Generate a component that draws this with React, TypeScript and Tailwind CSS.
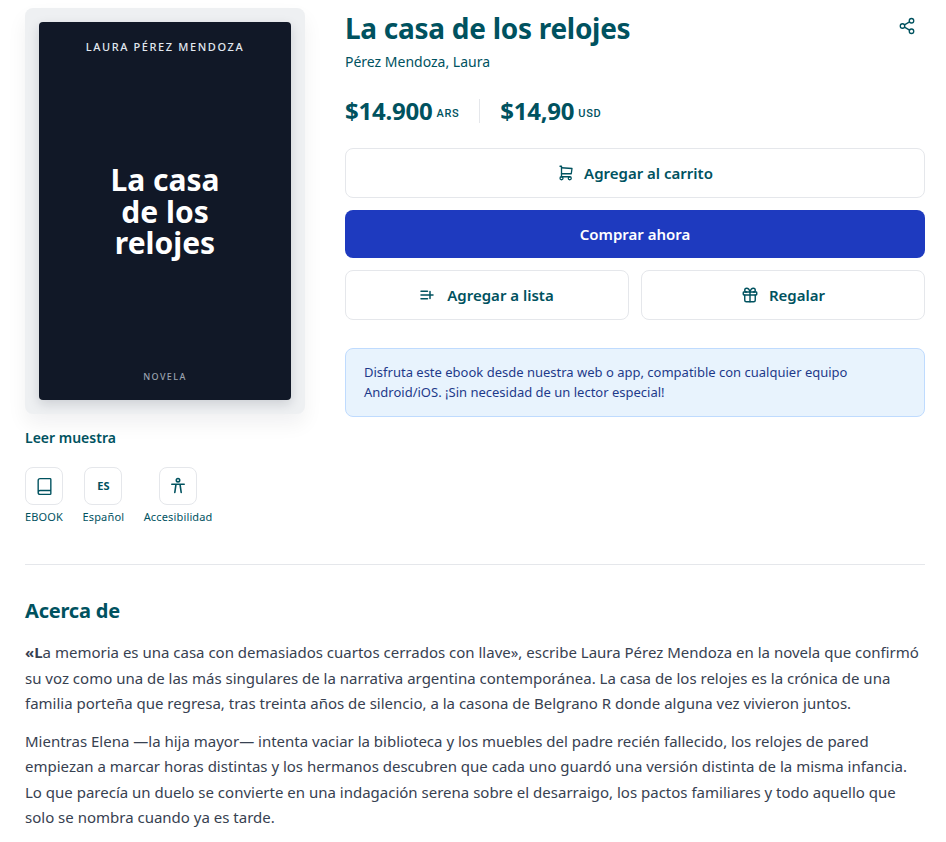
import { Book, Share2 } from "lucide-react";
import { TbGift, TbShoppingCart } from "react-icons/tb";

const noto = "font-['Noto_Sans',sans-serif]";

function ListAdd() {
  return (
    <svg width="14" height="14" viewBox="0 0 14 14" fill="none" stroke="currentColor" strokeWidth="1.5" strokeLinecap="round">
      <path d="M1 3.2h6.5M1 7h12M1 10.8h6.5M10 3.5v7" />
    </svg>
  );
}

function Person() {
  return (
    <svg width="18" height="18" viewBox="0 0 18 18" fill="none" stroke="currentColor" strokeWidth="1.6" strokeLinecap="round">
      <circle cx="9" cy="3.2" r="1.7" />
      <path d="M2.8 7.2h12.4M7 7.2 5.8 15.5M11 7.2l1.2 8.3" />
    </svg>
  );
}

function Feature({ icon, label }: { icon: React.ReactNode; label: string }) {
  return (
    <div className="flex flex-col items-center gap-[4px]">
      <div className="flex h-[38px] w-[38px] items-center justify-center rounded-lg border border-[#e5e7eb] bg-white text-[#00525f]">
        {icon}
      </div>
      <span className="text-[11px] leading-[16px] tracking-[0.15px] text-[#00525f]">{label}</span>
    </div>
  );
}

export default function App() {
  return (
    <div className={`${noto} min-h-[842px] w-[900px] ml-[25px] bg-white pt-2 text-[#00525f]`}>
      <div className="flex gap-10">
        <div className="w-[280px] shrink-0">
          <div className="rounded-lg bg-[#eef0f2] p-[14px] shadow-[0_10px_20px_rgba(15,23,42,0.06)]">
            <div className="flex h-[378px] flex-col items-center rounded bg-[#111827] pt-[17px] pb-[16px] shadow-[0_4px_12px_rgba(15,23,42,0.15)]">
              <div className="text-[11px] leading-[16px] font-medium tracking-[1.6px] text-[#e2e8f0]">LAURA PÉREZ MENDOZA</div>
              <div className="flex flex-1 items-center text-center text-[30px] leading-[31.5px] font-bold text-white">
                <span className="w-[130px] -translate-y-[1px]">La casa de los relojes</span>
              </div>
              <div className="text-[9px] leading-[14px] font-medium tracking-[1.4px] text-[#9ca3af]">NOVELA</div>
            </div>
          </div>
          <div className="mt-[14px] text-sm leading-5 font-semibold">Leer muestra</div>
          <div className="mt-[19px] flex gap-[19.5px]">
            <Feature icon={<Book size={19} strokeWidth={1.75} />} label="EBOOK" />
            <Feature icon={<span className="text-[11px] font-bold">ES</span>} label="Español" />
            <Feature icon={<Person />} label="Accesibilidad" />
          </div>
        </div>
        <div className="min-w-0 flex-1">
          <div className="flex items-start justify-between">
            <h1 className="text-[28px] leading-[40px] font-bold tracking-[-0.01em]">La casa de los relojes</h1>
            <Share2 size={18} strokeWidth={1.75} className="mt-[9px] mr-[9px]" />
          </div>
          <div className="mt-[4px] text-sm leading-5">Pérez Mendoza, Laura</div>
          <div className="mt-[23px] flex items-center">
            <span className="text-[24px] leading-8 font-bold tracking-[-0.01em]">$14.900</span>
            <span className="mt-[6px] ml-1 text-[11px] font-medium tracking-[0.06em] font-['Roboto']">ARS</span>
            <span className="mx-[20px] h-6 w-px bg-[#e5e7eb]" />
            <span className="text-[24px] leading-8 font-bold tracking-[-0.01em]">$14,90</span>
            <span className="mt-[6px] ml-1 text-[11px] font-medium tracking-[0.06em] font-['Roboto']">USD</span>
          </div>
          <button className="mt-[21px] flex h-[50px] w-full items-center justify-center gap-[9px] rounded-lg border border-[#e5e7eb] bg-white text-[15px] font-semibold">
            <TbShoppingCart size={18} strokeWidth={1.75} />
            Agregar al carrito
          </button>
          <button className="mt-3 flex h-[48px] w-full items-center justify-center rounded-lg bg-[#1e3abf] text-[15px] font-semibold text-white">
            Comprar ahora
          </button>
          <div className="mt-3 grid grid-cols-2 gap-3">
            <button className="flex h-[50px] items-center justify-center gap-[13px] rounded-lg border border-[#e5e7eb] bg-white text-[15px] font-semibold">
              <ListAdd />
              Agregar a lista
            </button>
            <button className="flex h-[50px] items-center justify-center gap-[10px] rounded-lg border border-[#e5e7eb] bg-white text-[15px] font-semibold">
              <TbGift size={18} strokeWidth={1.9} />
              Regalar
            </button>
          </div>
          <div className="mt-[28px] rounded-lg border border-[#bfdbfe] bg-[#e8f3fd] px-[18px] pt-[13px] pb-[14px] text-[13px] leading-5 text-[#1e3a8a]">
            Disfruta este ebook desde nuestra web o app, compatible con cualquier equipo Android/iOS. ¡Sin necesidad de un lector especial!
          </div>
        </div>
      </div>
      <div className="mt-[39px] border-t border-[#e5e7eb] pt-[32px]">
        <h2 className="text-[20px] leading-7 font-bold tracking-[-0.01em]">Acerca de</h2>
        <div className="mt-[15px] flex flex-col gap-[12px] text-[15px] leading-[25.5px] text-[#374151]">
          <p>
            <strong>«L</strong>a memoria es una casa con demasiados cuartos cerrados con llave», escribe Laura Pérez Mendoza en la novela que confirmó su voz como una de las más singulares de la narrativa argentina contemporánea. La casa de los relojes es la crónica de una familia porteña que regresa, tras treinta años de silencio, a la casona de Belgrano R donde alguna vez vivieron juntos.
          </p>
          <p>
            Mientras Elena —la hija mayor— intenta vaciar la biblioteca y los muebles del padre recién fallecido, los relojes de pared empiezan a marcar horas distintas y los hermanos descubren que cada uno guardó una versión distinta de la misma infancia. Lo que parecía un duelo se convierte en una indagación serena sobre el desarraigo, los pactos familiares y todo aquello que solo se nombra cuando ya es tarde.
          </p>
        </div>
      </div>
    </div>
  );
}
